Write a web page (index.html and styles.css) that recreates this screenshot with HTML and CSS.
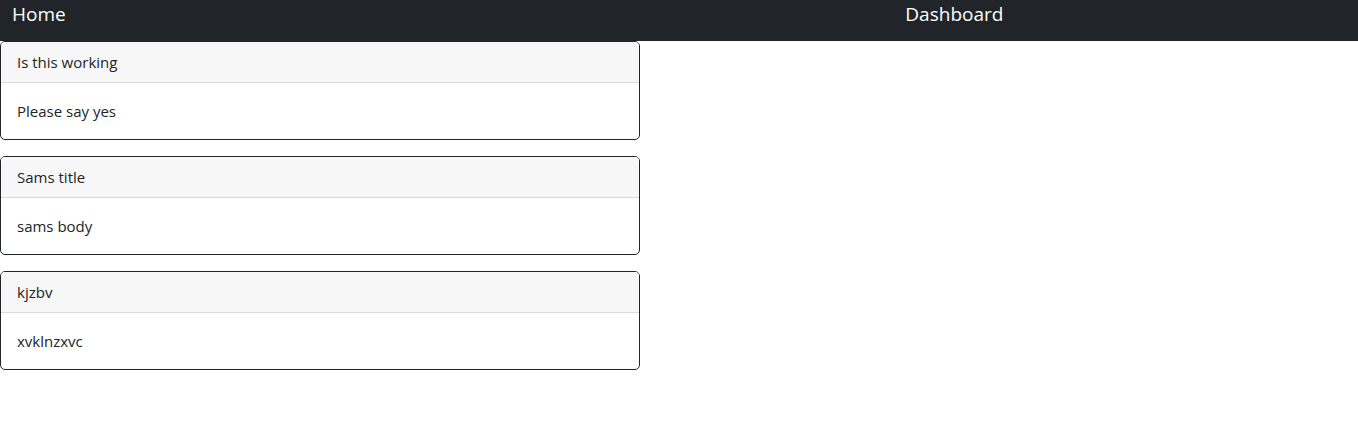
FILE: index.html
```html
<!DOCTYPE html>
<html>
<head>
<meta charset="utf-8">
<link rel="stylesheet" href="styles.css">
</head>
<body>
<nav class="navbar">
  <a class="nav-link home">Home</a>
  <span></span>
  <a class="nav-link">Dashboard</a>
</nav>
<main class="cards">
  <div class="card">
    <div class="card-header">Is this working</div>
    <div class="card-body">Please say yes</div>
  </div>
  <div class="card">
    <div class="card-header">Sams title</div>
    <div class="card-body">sams body</div>
  </div>
  <div class="card">
    <div class="card-header">kjzbv</div>
    <div class="card-body">xvklnzxvc</div>
  </div>
</main>
</body>
</html>
```
FILE: styles.css
```css
* { box-sizing: border-box; }
body {
  margin: 0;
  font-family: "Open Sans", "Noto Sans", sans-serif;
  font-size: 15px;
  color: #212529;
  background: #fff;
}
.navbar {
  display: grid;
  grid-template-columns: 1fr 1fr 1fr;
  height: 41px;
  background: #212529;
  align-items: start;
}
.nav-link {
  color: #fff;
  font-size: 19px;
  line-height: 28px;
  text-decoration: none;
}
.home { padding-left: 12px; }
.cards {
  width: 640px;
  display: flex;
  flex-direction: column;
  gap: 16px;
}
.card {
  border: 1px solid #212529;
  border-radius: 5px;
  overflow: hidden;
}
.card-header {
  background: #f7f7f7;
  border-bottom: 1px solid #d9d9d9;
  padding: 8px 16px;
  line-height: 24px;
  height: 41px;
}
.card-body {
  padding: 16px 16px;
  line-height: 24px;
  height: 56px;
}
```
